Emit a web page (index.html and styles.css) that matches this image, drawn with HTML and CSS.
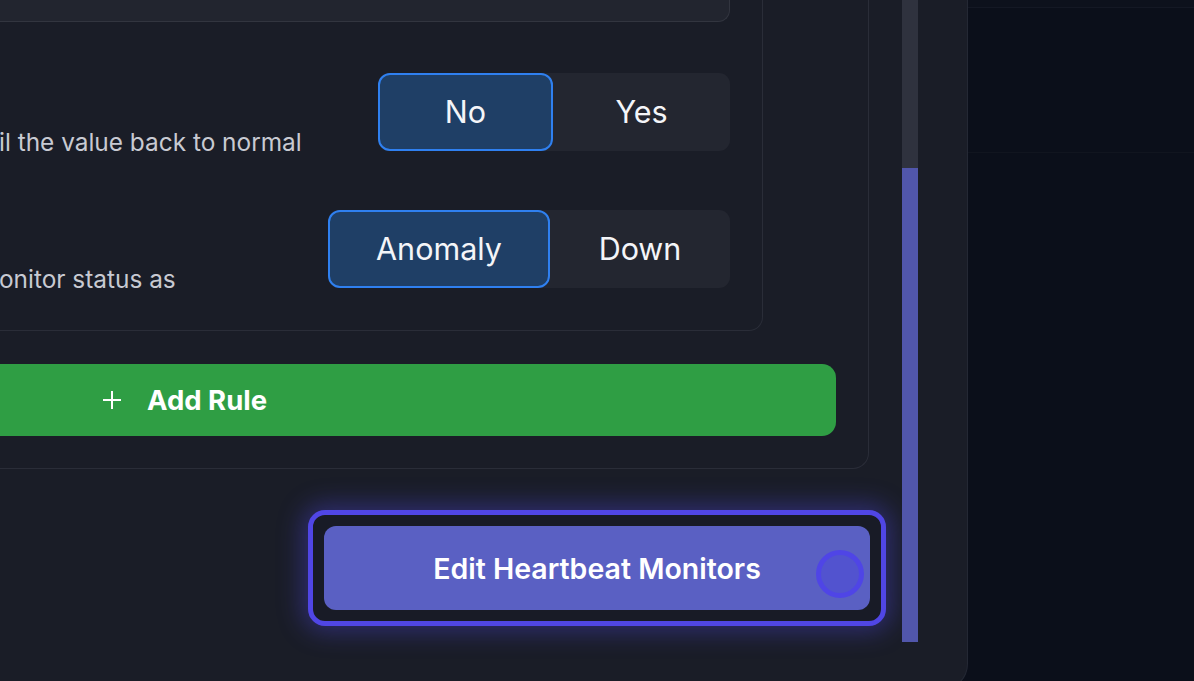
FILE: index.html
```html
<!DOCTYPE html>
<html lang="en">
<head>
<meta charset="utf-8">
<title>Edit Heartbeat Monitors</title>
<link rel="stylesheet" href="styles.css">
</head>
<body>
<div class="app">
  <div class="panel">
    <div class="content">
      <div class="section-card">
        <div class="rules-card">
          <div class="field"></div>
          <div class="rule-row row-first">
            <p class="desc">il the value back to normal</p>
            <div class="seg">
              <button class="seg-btn active w-no">No</button>
              <button class="seg-btn w-yes">Yes</button>
            </div>
          </div>
          <div class="rule-row row-second">
            <p class="desc">onitor status as</p>
            <div class="seg">
              <button class="seg-btn active w-anomaly">Anomaly</button>
              <button class="seg-btn w-down">Down</button>
            </div>
          </div>
        </div>
        <button class="add-rule">
          <svg class="plus" viewBox="0 0 20 20" width="20" height="20" aria-hidden="true"><path d="M10 1v18M1 10h18" stroke="#fff" stroke-width="2" fill="none"/></svg>
          <span>Add Rule</span>
        </button>
      </div>
      <div class="submit-row">
        <div class="focus-ring">
          <button class="submit-btn">Edit Heartbeat Monitors<span class="spinner"></span></button>
        </div>
      </div>
    </div>
    <div class="scrollbar"><div class="thumb"></div></div>
  </div>
  <div class="side">
    <div class="side-top"></div>
    <div class="side-band"></div>
  </div>
</div>
</body>
</html>
```
FILE: styles.css
```css
* { box-sizing: border-box; }
html, body {
  margin: 0;
  padding: 0;
  height: 100%;
  background: #0b0f1a;
  font-family: Inter, "Noto Sans", sans-serif;
  overflow: hidden;
}
.app {
  display: flex;
  width: 1194px;
  height: 681px;
}
.panel {
  width: 968px;
  height: 690px;
  background: #1a1d27;
  border-right: 1px solid #242834;
  border-bottom: 1px solid #242834;
  border-radius: 0 0 26px 0;
  display: flex;
  padding-right: 49px;
  flex-shrink: 0;
}
.content {
  flex: 1;
  display: flex;
  flex-direction: column;
  margin-right: 16px;
}
.section-card {
  margin-right: 17px;
  border-right: 1px solid #2a2d38;
  border-bottom: 1px solid #2a2d38;
  border-radius: 0 0 16px 0;
  padding: 0 32px 32px 0;
}
.rules-card {
  margin-right: 73px;
  border-right: 1px solid #2a2d38;
  border-bottom: 1px solid #2a2d38;
  border-radius: 0 0 14px 0;
  padding: 0 32px 42px 0;
}
.field {
  height: 22px;
  background: #22252f;
  border-right: 1px solid #32353f;
  border-bottom: 1px solid #32353f;
  border-radius: 0 0 12px 0;
}
.rule-row {
  display: flex;
  justify-content: space-between;
  align-items: flex-end;
}
.row-first { margin-top: 51px; }
.row-second { margin-top: 59px; }
.desc {
  margin: 0 0 -5px -1px;
  font-size: 24.4px;
  line-height: 28px;
  color: #c8cad2;
  white-space: nowrap;
}
.row-second .desc { margin-bottom: -5px; }
.seg {
  display: flex;
  height: 78px;
  background: #232630;
  border-radius: 11px;
}
.seg-btn {
  height: 78px;
  border: 2px solid transparent;
  border-radius: 12px;
  background: transparent;
  color: #f4f5f8;
  font-family: Inter, "Noto Sans", sans-serif;
  font-size: 30.5px;
  font-weight: 400;
  padding: 0 0 2px;
  cursor: pointer;
}
.seg-btn.active {
  background: #1f3f66;
  border-color: #2f80f0;
}
.w-no { width: 175px; }
.w-yes { width: 177px; }
.w-anomaly { width: 222px; }
.w-down { width: 180px; }
.add-rule {
  margin-top: 33px;
  width: 100%;
  height: 72px;
  background: #2f9e44;
  border: 0;
  border-radius: 0 14px 14px 0;
  color: #fff;
  display: flex;
  align-items: center;
  padding: 0 0 0 102px;
  font-family: Inter, "Noto Sans", sans-serif;
  font-size: 27.5px;
  font-weight: 700;
  gap: 25px;
}
.plus { flex-shrink: 0; }
.submit-row {
  display: flex;
  justify-content: flex-end;
  margin-top: 41px;
}
.focus-ring {
  width: 578px;
  height: 116px;
  border: 5px solid #5046e5;
  border-radius: 17px;
  background: #181b26;
  padding: 11px;
  box-shadow: 0 0 24px 6px rgba(80, 70, 229, 0.38);
}
.submit-btn {
  position: relative;
  width: 100%;
  height: 84px;
  border: 0;
  border-radius: 12px;
  background: #5a60c3;
  color: #fff;
  font-family: Inter, "Noto Sans", sans-serif;
  font-size: 28.5px;
  font-weight: 600;
  padding: 0;
}
.spinner {
  position: absolute;
  right: 6px;
  top: 24px;
  width: 48px;
  height: 48px;
  border-radius: 50%;
  border: 5px solid #4f45e6;
  background: #5253cf;
}
.scrollbar {
  width: 16px;
  height: 642px;
  background: #2f323e;
  display: flex;
  flex-direction: column;
  padding-top: 168px;
}
.thumb {
  flex: 1;
  background: #5156ab;
}
.side {
  flex: 1;
  display: flex;
  flex-direction: column;
}
.side-top {
  height: 8px;
  background: #0d111c;
  border-bottom: 1px solid #141824;
}
.side-band {
  height: 145px;
  border-bottom: 1px solid #11151f;
}
```
